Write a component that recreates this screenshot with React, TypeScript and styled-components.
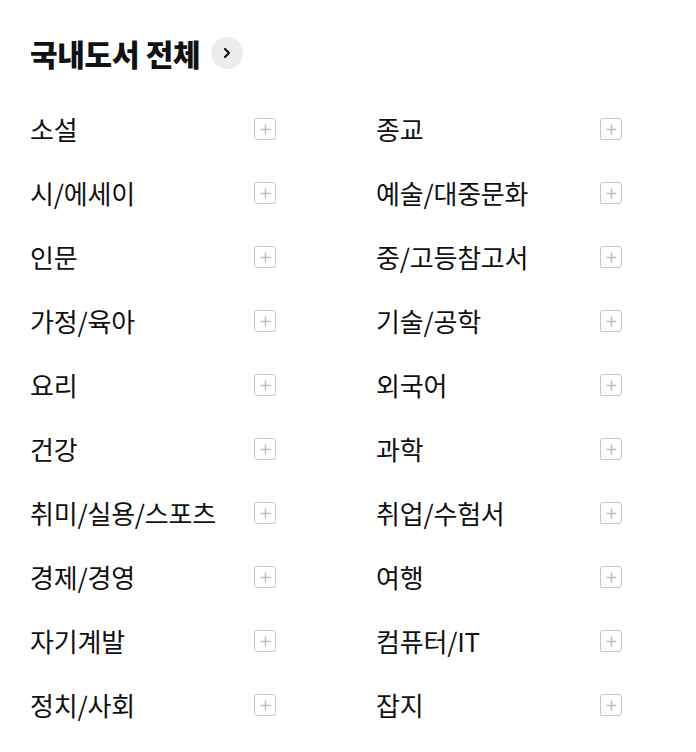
import React from "react";
import styled, { createGlobalStyle } from "styled-components";

const Global = createGlobalStyle`
  html, body { margin: 0; padding: 0; background: #fff; }
  body { font-family: "Noto Sans CJK KR", "Noto Sans", sans-serif; color: #111; }
`;

const Page = styled.div`
  padding: 37px 74px 0 30px;
`;

const TitleRow = styled.div`
  display: flex;
  align-items: center;
  gap: 11px;
  height: 32px;
  margin-bottom: 30px;
`;

const Title = styled.h2`
  margin: 0;
  font-size: 30px;
  font-weight: 900;
  letter-spacing: -0.3px;
  line-height: 32px;
  color: #111;
`;

const CircleButton = styled.button`
  width: 32px;
  height: 32px;
  border-radius: 50%;
  border: none;
  background: #ececec;
  display: flex;
  align-items: center;
  justify-content: center;
  padding: 0;
  cursor: pointer;
`;

const Grid = styled.ul`
  list-style: none;
  margin: 0;
  padding: 0;
  display: grid;
  grid-template-columns: 1fr 1fr;
  column-gap: 100px;
`;

const Item = styled.li`
  display: flex;
  align-items: center;
  justify-content: space-between;
  height: 64px;
`;

const Label = styled.span`
  font-size: 26px;
  font-weight: 400;
  letter-spacing: -0.2px;
  line-height: 30px;
  margin-top: -4px;
  color: #111;
`;

const PlusBox = styled.span`
  width: 22px;
  height: 22px;
  box-sizing: border-box;
  border: 1.6px solid #c6c6c6;
  border-radius: 3px;
  display: flex;
  align-items: center;
  justify-content: center;
  margin-top: -4px;
`;

const left = ["소설", "시/에세이", "인문", "가정/육아", "요리", "건강", "취미/실용/스포츠", "경제/경영", "자기계발", "정치/사회"];
const right = ["종교", "예술/대중문화", "중/고등참고서", "기술/공학", "외국어", "과학", "취업/수험서", "여행", "컴퓨터/IT", "잡지"];

const items: string[] = [];
left.forEach((l, i) => {
  items.push(l, right[i]);
});

export default function App() {
  return (
    <Page>
      <Global />
      <TitleRow>
        <Title>국내도서 전체</Title>
        <CircleButton aria-label="more">
          <svg width="10" height="12" viewBox="0 0 10 12">
            <path d="M3 2 L7 6 L3 10" fill="none" stroke="#111" strokeWidth="2.2" strokeLinecap="round" strokeLinejoin="round" />
          </svg>
        </CircleButton>
      </TitleRow>
      <Grid>
        {items.map((t) => (
          <Item key={t}>
            <Label>{t}</Label>
            <PlusBox>
              <svg width="11" height="11" viewBox="0 0 11 11">
                <path d="M5.5 0.5 V10.5 M0.5 5.5 H10.5" stroke="#bbbbbb" strokeWidth="1.5" />
              </svg>
            </PlusBox>
          </Item>
        ))}
      </Grid>
    </Page>
  );
}
